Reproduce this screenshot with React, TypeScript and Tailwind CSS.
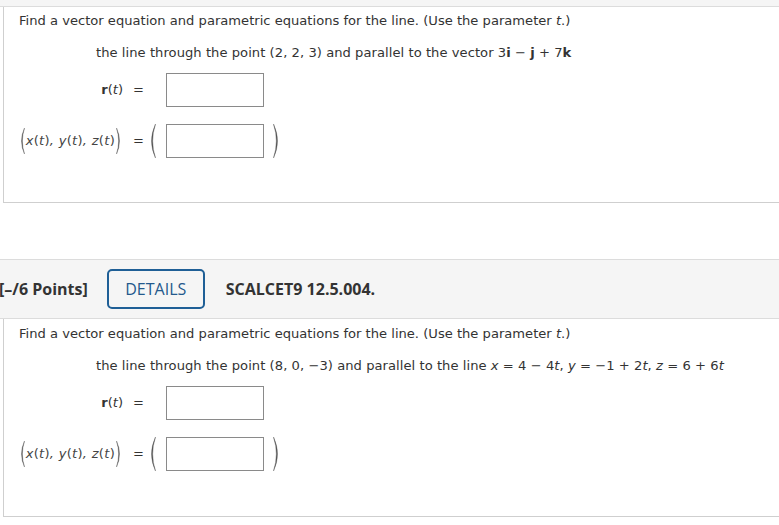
import React from "react";

const BigParen = ({ dir, h, w = 10 }: { dir: "l" | "r"; h: number; w?: number }) => (
  <svg width={w} height={h} viewBox={`0 0 ${w} ${h}`} className="block shrink-0">
    {dir === "l" ? (
      <path
        d={`M${w - 1.5} 1 Q0.5 ${h / 2} ${w - 1.5} ${h - 1} Q${w * 0.28} ${h / 2} ${w - 1.5} 1Z`}
        fill="#555"
        stroke="#555"
        strokeWidth="0.4"
      />
    ) : (
      <path
        d={`M1.5 1 Q${w - 0.5} ${h / 2} 1.5 ${h - 1} Q${w * 0.72} ${h / 2} 1.5 1Z`}
        fill="#555"
        stroke="#555"
        strokeWidth="0.4"
      />
    )}
  </svg>
);

const Box = () => <div className="w-[98px] h-[34px] shrink-0 border border-[#8a8a8a] bg-white" />;

const Rows = () => (
  <>
    <div className="flex items-center mt-[12px]">
      <div className="w-[104px] shrink-0 flex justify-end text-[13px] text-[#333]">
        <span>
          <b>r</b>(<i>t</i>)
        </span>
      </div>
      <div className="w-[14px] ml-[10px] text-[13px] text-[#333]">=</div>
      <div className="w-[19px]" />
      <Box />
    </div>
    <div className="flex items-center mt-[16px]">
      <div className="w-[104px] shrink-0 flex justify-end items-center text-[13px] text-[#444]">
        <BigParen dir="l" h={28} w={8} />
        <span className="italic whitespace-nowrap shrink-0 tracking-[0.3px]">
          x<span className="not-italic">(</span>t<span className="not-italic">)</span>, y<span className="not-italic">(</span>t
          <span className="not-italic">)</span>, z<span className="not-italic">(</span>t<span className="not-italic">)</span>
        </span>
        <BigParen dir="r" h={28} w={8} />
      </div>
      <div className="w-[14px] ml-[10px] text-[13px] text-[#333]">=</div>
      <div className="w-[19px] flex">
        <BigParen dir="l" h={36} />
      </div>
      <Box />
      <div className="ml-[8px]">
        <BigParen dir="r" h={36} />
      </div>
    </div>
  </>
);

export default function App() {
  return (
    <div
      className="w-[779px] h-[525px] bg-white overflow-hidden text-[#333]"
      style={{ fontFamily: '"DejaVu Sans", Verdana, sans-serif' }}
    >
      <div className="h-[7px] bg-[#f5f5f5] border-b border-[#dcdcdc]" />
      <div className="ml-[3px] border-l border-b border-[#cfcfcf] pl-[15px] pt-[6px] pb-[43px]">
        <div className="text-[13.1px] leading-[16px]">
          Find a vector equation and parametric equations for the line. (Use the parameter <i>t</i>.)
        </div>
        <div className="text-[13.1px] leading-[16px] mt-[16px] ml-[77px] tracking-[0.05px]">
          the line through the point (2, 2, 3) and parallel to the vector 3<b>i</b> − <b>j</b> + 7<b>k</b>
        </div>
        <Rows />
      </div>
      <div className="h-[56px]" />
      <div
        className="h-[60px] bg-[#f5f5f5] border-t border-b border-[#dcdcdc] flex items-center"
        style={{ fontFamily: '"Open Sans", sans-serif' }}
      >
        <div className="ml-[-1px] text-[16px] font-bold text-[#333] whitespace-nowrap">[–/6 Points]</div>
        <div className="ml-[19px] w-[98px] h-[40px] border-2 border-[#1f5f96] rounded-[5px] flex items-center justify-center text-[16px] font-medium text-[#23598c]">
          DETAILS
        </div>
        <div className="ml-[21px] text-[16px] font-bold text-[#333]">SCALCET9 12.5.004.</div>
      </div>
      <div className="ml-[3px] border-l border-b border-[#cfcfcf] pl-[15px] pt-[7px] pb-[44px]">
        <div className="text-[13.1px] leading-[16px]">
          Find a vector equation and parametric equations for the line. (Use the parameter <i>t</i>.)
        </div>
        <div className="text-[13.1px] leading-[16px] mt-[16px] ml-[77px] tracking-[0.05px]">
          the line through the point (8, 0, −3) and parallel to the line <i>x</i> = 4 − 4<i>t</i>,{" "}
          <i>y</i> = −1 + 2<i>t</i>, <i>z</i> = 6 + 6<i>t</i>
        </div>
        <Rows />
      </div>
    </div>
  );
}
